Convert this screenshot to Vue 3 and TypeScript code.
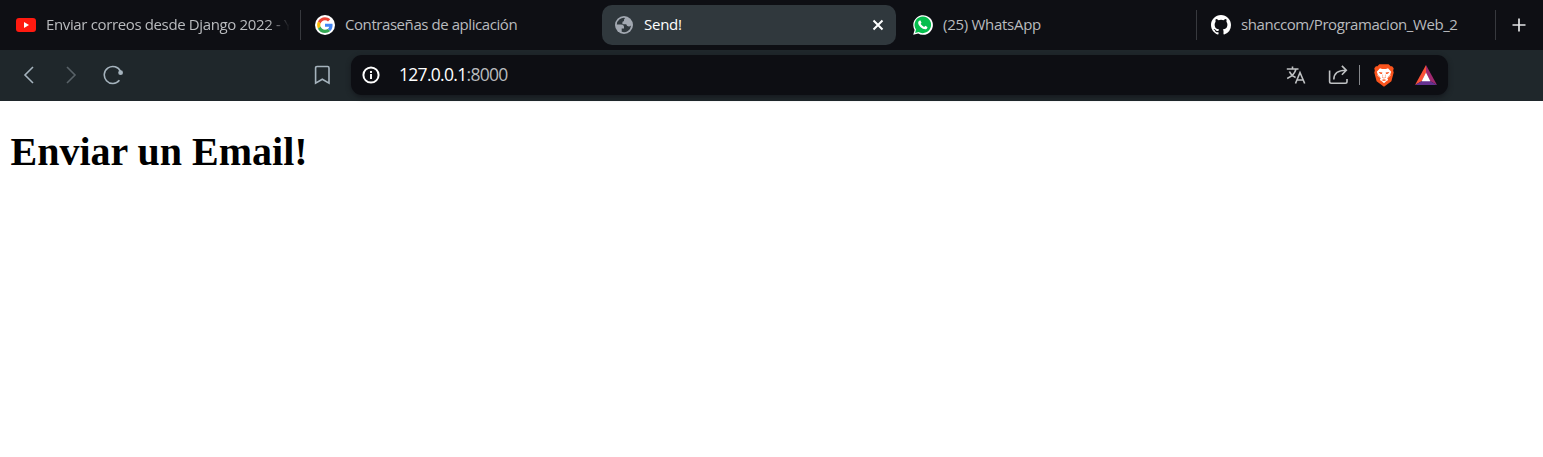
<script setup lang="ts">
interface Tab {
  id: string
  title: string
  active?: boolean
}

const tabs: Tab[] = [
  { id: 'youtube', title: 'Enviar correos desde Django 2022 - Y' },
  { id: 'google', title: 'Contraseñas de aplicación' },
  { id: 'send', title: 'Send!', active: true },
  { id: 'whatsapp', title: '(25) WhatsApp' },
  { id: 'github', title: 'shanccom/Programacion_Web_2' },
]
</script>

<template>
  <div class="browser">
    <header class="tabs">
      <div v-for="tab in tabs" :key="tab.id" class="tab" :class="[tab.id, { active: tab.active }]">
        <svg v-if="tab.id === 'youtube'" class="favicon" viewBox="0 0 20 20">
          <rect y="3" width="20" height="14" rx="3" fill="#ff1a10" />
          <path d="M8 7.1v5.8l5-2.9z" fill="#fff" />
        </svg>
        <svg v-else-if="tab.id === 'google'" class="favicon" viewBox="0 0 20 20">
          <circle cx="10" cy="10" r="10" fill="#fff" />
          <g transform="translate(2.1 2.2) scale(.329)">
            <path fill="#ea4335" d="M24 9.5c3.54 0 6.71 1.22 9.21 3.6l6.85-6.85C35.9 2.38 30.47 0 24 0 14.62 0 6.51 5.38 2.56 13.22l7.98 6.19C12.43 13.72 17.74 9.5 24 9.5z" />
            <path fill="#4285f4" d="M46.98 24.55c0-1.57-.15-3.09-.38-4.55H24v9.02h12.94c-.58 2.96-2.26 5.48-4.78 7.18l7.73 6c4.51-4.18 7.09-10.36 7.09-17.65z" />
            <path fill="#fbbc05" d="M10.53 28.59A14.5 14.5 0 0 1 9.77 24c0-1.6.27-3.14.76-4.59l-7.98-6.19A24 24 0 0 0 0 24c0 3.88.92 7.54 2.56 10.78z" />
            <path fill="#34a853" d="M24 48c6.48 0 11.93-2.13 15.89-5.81l-7.73-6c-2.15 1.45-4.92 2.3-8.16 2.3-6.26 0-11.57-4.22-13.47-9.91l-7.98 6.19C6.51 42.62 14.62 48 24 48z" />
          </g>
        </svg>
        <svg v-else-if="tab.id === 'send'" class="favicon" viewBox="0 0 20 20">
          <circle cx="10" cy="10" r="9" fill="#a2a8b1" />
          <path d="M11.2 2.9A7.2 7.2 0 0 0 2.8 9.5H7c2 0 3 1 3 2.8v1.2H7.7v3.3a7.2 7.2 0 0 0 9.4-6.2c-1.2 1-2.5 1.2-3.7.5-.8-.4-.6-1.6-1.5-1.8H8.4V7.7c0-1 .7-1.4 1.6-1.4V5c0-1 .5-1.4 1.2-2.1z" fill="#30383d" />
        </svg>
        <svg v-else-if="tab.id === 'whatsapp'" class="favicon" viewBox="0 0 20 20">
          <path d="M.2 19.8 1.6 14.9A9.8 9.8 0 1 1 5.2 18.5z" fill="#fff" />
          <path d="M2.1 17.9 3 14.6A8.3 8.3 0 1 1 5.6 17z" fill="#05be4d" />
          <path d="M6.7 5.4h.8l1 2.3-.8 1.1c.8 1.5 1.8 2.4 3.5 3.1l1-1.1 2.2 1.1c.1 1.4-1 2.3-2.2 2.3-2.9 0-6.6-3.4-7-6-.2-1.1.5-2.5 1.5-2.8z" fill="#fff" />
        </svg>
        <svg v-else class="favicon" viewBox="0 0 16 16">
          <path fill="#fff" d="M8 0C3.58 0 0 3.58 0 8c0 3.54 2.29 6.53 5.47 7.59.4.07.55-.17.55-.38 0-.19-.01-.82-.01-1.49-2.01.37-2.53-.49-2.69-.94-.09-.23-.48-.94-.82-1.13-.28-.15-.68-.52-.01-.53.63-.01 1.08.58 1.23.82.72 1.21 1.87.87 2.33.66.07-.52.28-.87.51-1.07-1.78-.2-3.64-.89-3.64-3.95 0-.87.31-1.59.82-2.15-.08-.2-.36-1.02.08-2.12 0 0 .67-.21 2.2.82a7.65 7.65 0 0 1 4 0c1.53-1.04 2.2-.82 2.2-.82.44 1.1.16 1.92.08 2.12.51.56.82 1.27.82 2.15 0 3.07-1.87 3.75-3.65 3.95.29.25.54.73.54 1.48 0 1.07-.01 1.93-.01 2.2 0 .21.15.46.55.38A8.01 8.01 0 0 0 16 8c0-4.42-3.58-8-8-8z" />
        </svg>
        <span class="title">{{ tab.title }}</span>
        <svg v-if="tab.active" class="close" viewBox="0 0 12 12">
          <path d="m1.5 1.5 9 9m0-9-9 9" stroke="#fff" stroke-width="2" />
        </svg>
      </div>
      <svg class="plus" viewBox="0 0 14 14">
        <path d="M7 .5v13M.5 7h13" stroke="#e2e3e5" stroke-width="1.7" />
      </svg>
    </header>

    <nav class="toolbar">
      <svg class="nav-icon back" viewBox="0 0 20 20">
        <path d="M13 2 5 10l8 8" />
      </svg>
      <svg class="nav-icon forward" viewBox="0 0 20 20">
        <path d="m6 2 8 8-8 8" />
      </svg>
      <svg class="nav-icon reload" viewBox="0 0 20 20">
        <path d="M17.5 6.4A8.5 8.5 0 1 0 16.4 15.3" />
        <circle cx="17.6" cy="7.7" r="2.4" fill="#a5b3bd" stroke="none" />
      </svg>
      <svg class="nav-icon bookmark" viewBox="0 0 20 20">
        <path d="M5 1.5h10.6q1.4 0 1.4 1.4v15.3l-6.7-3.9-6.7 3.9V2.9Q3.6 1.5 5 1.5z" />
      </svg>
      <div class="address">
        <svg class="info" viewBox="0 0 18 18">
          <circle cx="9" cy="9" r="7.6" fill="none" stroke="#fff" stroke-width="2" />
          <path d="M9 8v5M9 5v2" stroke="#fff" stroke-width="1.9" />
        </svg>
        <span class="url">127.0.0.1<span class="port">:8000</span></span>
        <svg class="translate" viewBox="0 0 20 20">
          <path d="M.8 4h11.7M6.5 1.5V4M10 4C9 8 5.5 11.6 1.2 13.4M3.4 6.5c1.3 2.9 3.7 5 6.2 6.1M9.5 18.5 14 7.5l4.7 11M11 15h6.3" />
        </svg>
        <svg class="share" viewBox="0 0 20 20">
          <path d="M1.6 5.5v11q0 1.7 1.7 1.7h14q1.7 0 1.7-1.7v-2.4M5.8 14.5C5.8 8.5 9.5 5.3 18 5.3M13.9.9l4.4 4.4-4.4 4.4" />
        </svg>
        <i class="divider"></i>
        <svg class="brave" viewBox="0 0 20 23">
          <path d="M5.4.3h9.2l2 2 1.5-.1 1.6 2-.5 2.5.5 1.8-2.3 8.8L10 22.7l-7.4-5.4L.3 8.5l.5-1.8-.5-2.5 1.6-2 1.5.1z" fill="#fa541d" />
          <path d="m6 4.2 2.1.7h3.8l2.1-.7 3.2 3.6-1 2.6.4 1-3 3.1.5 1.4-1.9 1.3-2.2 2-2.2-2-1.9-1.3.5-1.4-3-3.1.4-1-1-2.6z" fill="#fff" />
          <path d="m4.6 8.1 3.8.5L7.9 10l-1.8-.2zm10.8 0-3.8.5.5 1.4 1.8-.2zM8.4 9.8l.8 2.2-.8 1.1 1.6 1 1.6-1-.8-1.1.8-2.2-.3 2.4.8 1.1-2.1 1.3-2.1-1.3.8-1.1zM7.4 16l2.6-.8 2.6.8-2.6.9z" fill="#fa541d" />
          <path d="m4.2 11.3 2.3 3.3M15.8 11.3l-2.3 3.3" stroke="#fa541d" stroke-width=".7" />
        </svg>
        <svg class="bat" viewBox="0 0 22 20">
          <path d="M11 0 0 20l7-4 4-8z" fill="#fa5238" />
          <path d="M11 0v8l4 8 7 4z" fill="#a02970" />
          <path d="m0 20 7-4h8l7 4z" fill="#653190" />
          <path d="m11 7.5-4.4 8.7h8.8z" fill="#fff" />
        </svg>
      </div>
    </nav>

    <main class="page">
      <h1>Enviar un Email!</h1>
    </main>
  </div>
</template>

<style>
body {
  margin: 0;
  background: #fff;
}
</style>

<style scoped>
.browser {
  width: 1543px;
  height: 457px;
  overflow: hidden;
  font-family: "Open Sans", "Noto Sans", sans-serif;
}
svg {
  display: block;
  flex: none;
}
.tabs {
  display: flex;
  align-items: center;
  height: 50px;
  background: #0e0f14;
}
.tab {
  display: flex;
  align-items: center;
  box-sizing: border-box;
  height: 30px;
  color: #b9bbbe;
  font-size: 15px;
}
.youtube {
  width: 301px;
  padding: 0 9px 0 16px;
  border-right: 1px solid #37393e;
}
.google {
  width: 301px;
  padding-left: 14px;
}
.send {
  width: 294px;
  height: 40px;
  padding: 0 12px;
  border-radius: 10px;
  background: #30383d;
  color: #fff;
}
.whatsapp {
  width: 301px;
  padding-left: 17px;
  border-right: 1px solid #37393e;
}
.github {
  width: 299px;
  padding-left: 14px;
  border-right: 1px solid #37393e;
}
.favicon {
  width: 20px;
  height: 20px;
  margin-right: 10px;
}
.title {
  flex: 1;
  padding-bottom: 2px;
  white-space: nowrap;
  line-height: 24px;
  letter-spacing: -0.43px;
}
.youtube .title {
  letter-spacing: -0.36px;
  mask-image: linear-gradient(to right, #000 calc(100% - 24px), transparent calc(100% - 2px));
}
.send .title {
  letter-spacing: -0.25px;
}
.whatsapp .title {
  letter-spacing: -0.28px;
}
.close {
  width: 12px;
  height: 12px;
}
.plus {
  width: 14px;
  height: 14px;
  margin-left: 16px;
}
.toolbar {
  display: flex;
  align-items: center;
  box-sizing: border-box;
  height: 51px;
  padding-bottom: 1px;
  background: #1f272b;
}
.nav-icon {
  width: 20px;
  height: 20px;
  fill: none;
  stroke: #a5b3bd;
  stroke-width: 1.6;
}
.back {
  margin-left: 20px;
}
.forward {
  margin-left: 21px;
  stroke: #596268;
}
.reload {
  margin-left: 22px;
}
.bookmark {
  margin-left: 189px;
}
.address {
  display: flex;
  align-items: center;
  box-sizing: border-box;
  width: 1097px;
  height: 40px;
  margin-left: 19px;
  padding: 0 11px;
  border-radius: 11px;
  background: #0d0e13;
  box-shadow: 0 2px 5px #16191e;
}
.info {
  width: 18px;
  height: 18px;
}
.url {
  flex: 1;
  margin-left: 19px;
  padding-bottom: 2px;
  color: #fff;
  font-size: 17.5px;
  line-height: 24px;
  letter-spacing: -0.7px;
}
.port {
  color: #b9bbbe;
}
.translate,
.share {
  width: 20px;
  height: 20px;
  fill: none;
  stroke: #bfc1c3;
  stroke-width: 1.6;
}
.share {
  margin-left: 22px;
}
.divider {
  width: 1px;
  height: 20px;
  margin-left: 11px;
  background: #85878b;
}
.brave {
  width: 20px;
  height: 23px;
  margin-left: 14px;
}
.bat {
  width: 22px;
  height: 20px;
  margin-left: 21px;
}
.page {
  padding: 28px 10.5px;
}
h1 {
  margin: 0;
  color: #000;
  font: bold 40px/46px "Liberation Serif", serif;
}
</style>
